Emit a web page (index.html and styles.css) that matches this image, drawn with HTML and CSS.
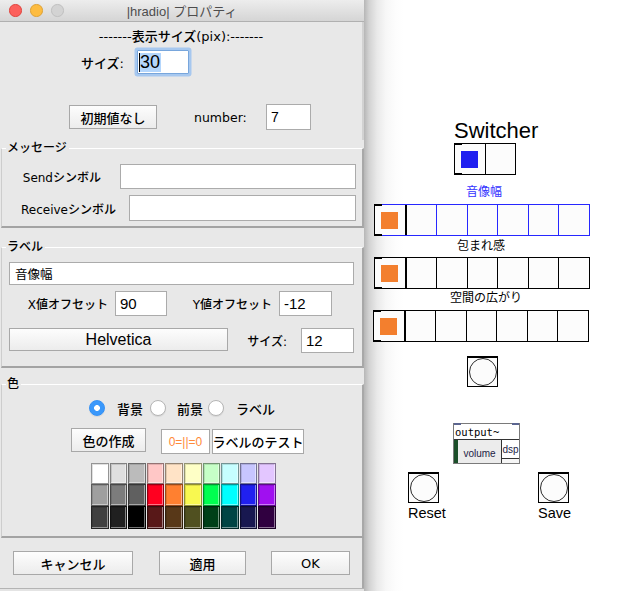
FILE: index.html
```html
<!DOCTYPE html>
<html lang="ja">
<head>
<meta charset="utf-8">
<title>|hradio| プロパティ</title>
<link rel="stylesheet" href="styles.css">
</head>
<body>
<div class="screen">
  <div class="dialog">
    <div class="titlebar">
      <div class="lights"><span class="light red"></span><span class="light yellow"></span><span class="light off"></span></div>
      <div class="title">|hradio| プロパティ</div>
      <div></div>
    </div>

    <section class="size-sec">
      <div class="heading">-------表示サイズ(pix):-------</div>
      <div class="size-row">
        <span class="lbl size-lbl">サイズ:</span>
        <span class="input focused"><span class="caret"></span><span class="sel">30</span></span>
      </div>
      <div class="num-row">
        <span class="btn init-btn">初期値なし</span>
        <span class="lbl num-lbl">number:</span>
        <span class="input num-in">7</span>
      </div>
    </section>

    <fieldset class="group msg">
      <legend>メッセージ</legend>
      <div class="mrow mrow1"><span class="lbl">Sendシンボル</span><span class="input send-in"></span></div>
      <div class="mrow mrow2"><span class="lbl">Receiveシンボル</span><span class="input recv-in"></span></div>
    </fieldset>

    <fieldset class="group label-grp">
      <legend>ラベル</legend>
      <div class="lrow1"><span class="input label-in">音像幅</span></div>
      <div class="lrow2">
        <span class="lbl xoff-lbl">X値オフセット</span><span class="input off-in big">90</span>
        <span class="lbl yoff-lbl">Y値オフセット</span><span class="input off-in2 big">-12</span>
      </div>
      <div class="lrow3">
        <span class="btn font-btn">Helvetica</span>
        <span class="lbl fsize-lbl">サイズ:</span>
        <span class="input fsize-in big">12</span>
      </div>
    </fieldset>

    <fieldset class="group color-grp">
      <legend>色</legend>
      <div class="radio-row">
        <span class="radio checked"></span><span class="rlbl r1">背景</span>
        <span class="radio r2"></span><span class="rlbl r2l">前景</span>
        <span class="radio r3"></span><span class="rlbl r3l">ラベル</span>
      </div>
      <div class="cbtn-row">
        <span class="btn make-btn">色の作成</span>
        <span class="testbox orange">0=||=0</span>
        <span class="testbox label-test">ラベルのテスト</span>
      </div>
      <div class="palette">
        <span class="sw" style="background:#ffffff"></span>
        <span class="sw" style="background:#dfdfdf"></span>
        <span class="sw" style="background:#bbbbbb"></span>
        <span class="sw" style="background:#ffc7c6"></span>
        <span class="sw" style="background:#ffe3c6"></span>
        <span class="sw" style="background:#feffc6"></span>
        <span class="sw" style="background:#c6ffc7"></span>
        <span class="sw" style="background:#c6feff"></span>
        <span class="sw" style="background:#c7c6ff"></span>
        <span class="sw" style="background:#e3c6ff"></span>
        <span class="sw" style="background:#9f9f9f"></span>
        <span class="sw" style="background:#7c7c7c"></span>
        <span class="sw" style="background:#606060"></span>
        <span class="sw" style="background:#ff0020"></span>
        <span class="sw" style="background:#ff8030"></span>
        <span class="sw" style="background:#f8f850"></span>
        <span class="sw" style="background:#00ff50"></span>
        <span class="sw" style="background:#00ffff"></span>
        <span class="sw" style="background:#2020f0"></span>
        <span class="sw" style="background:#a010f0"></span>
        <span class="sw" style="background:#404040"></span>
        <span class="sw" style="background:#202020"></span>
        <span class="sw" style="background:#000000"></span>
        <span class="sw" style="background:#581818"></span>
        <span class="sw" style="background:#583818"></span>
        <span class="sw" style="background:#505020"></span>
        <span class="sw" style="background:#004018"></span>
        <span class="sw" style="background:#004444"></span>
        <span class="sw" style="background:#181850"></span>
        <span class="sw" style="background:#300040"></span>
      </div>
    </fieldset>

    <div class="bottom">
      <span class="btn cancel-btn">キャンセル</span>
      <span class="btn apply-btn">適用</span>
      <span class="btn ok-btn">OK</span>
    </div>
  </div>

  <div class="canvas">
    <div class="c-title">Switcher</div>
    <div class="hr switcher"><span class="cell"><span class="dot blue-dot"></span></span><span class="cell"></span></div>

    <div class="clabel lab1">音像幅</div>
    <div class="hr row7 blue row-a"><span class="cell"><span class="dot"></span></span><span class="cell"></span><span class="cell"></span><span class="cell"></span><span class="cell"></span><span class="cell"></span><span class="cell"></span></div>

    <div class="clabel lab2">包まれ感</div>
    <div class="hr row7 row-b"><span class="cell"><span class="dot"></span></span><span class="cell"></span><span class="cell"></span><span class="cell"></span><span class="cell"></span><span class="cell"></span><span class="cell"></span></div>

    <div class="clabel lab3">空間の広がり</div>
    <div class="hr row7 row-c"><span class="cell"><span class="dot"></span></span><span class="cell"></span><span class="cell"></span><span class="cell"></span><span class="cell"></span><span class="cell"></span><span class="cell"></span></div>

    <div class="bang bang-mid"><span class="circle"></span></div>

    <div class="outobj">
      <div class="otext">output~</div>
      <div class="olower">
        <div class="vol">volume</div>
        <div class="dspcol"><div class="dsp">dsp</div></div>
      </div>
    </div>

    <div class="bang bang-reset"><span class="circle"></span></div>
    <div class="blabel reset-lbl">Reset</div>
    <div class="bang bang-save"><span class="circle"></span></div>
    <div class="blabel save-lbl">Save</div>
  </div>
</div>
</body>
</html>
```

FILE: styles.css
```css
* { box-sizing: border-box; }
html, body { margin: 0; padding: 0; }
body {
  width: 640px;
  height: 591px;
  overflow: hidden;
  font-family: "Liberation Sans", "Noto Sans CJK JP", sans-serif;
  font-size: 13px;
  color: #000;
  background: #e4e4e4;
}
.screen { display: flex; height: 591px; }

/* ---------- dialog ---------- */
.dialog {
  width: 364px;
  flex: none;
  height: 589px;
  background: #e8e8e8;
  border-bottom: 1px solid #b4b4b4;
  display: flex;
  flex-direction: column;
  font-family: "DejaVu Sans", "Noto Sans CJK JP", sans-serif;
  font-size: 12px;
  font-weight: 500;
}
.titlebar {
  height: 22px;
  flex: none;
  background: linear-gradient(#ededed, #d5d5d5);
  border-bottom: 1px solid #b0b0b0;
  display: grid;
  grid-template-columns: 1fr auto 1fr;
  align-items: center;
  font-family: "Liberation Sans", "Noto Sans CJK JP", sans-serif;
  font-weight: 400;
}
.lights { display: flex; gap: 8.5px; padding-left: 9px; }
.light { width: 12.5px; height: 12.5px; border-radius: 50%; }
.light.red { background: #fc605c; border: 1px solid #e0443e; }
.light.yellow { background: #fdbc40; border: 1px solid #dea236; }
.light.off { background: #d3d3d3; border: 1px solid #c0c0c0; }
.title { color: #4d4d4d; font-size: 13px; }

.lbl { white-space: nowrap; }
.input {
  background: #fff;
  border: 1px solid #ababab;
  display: flex;
  align-items: center;
  padding-left: 4px;
  white-space: nowrap;
  font-family: "Liberation Sans", "Noto Sans CJK JP", sans-serif;
  font-weight: 400;
}
.input.big { font-size: 15px; }
.btn {
  display: flex;
  align-items: center;
  justify-content: center;
  background: linear-gradient(#fdfdfd, #ececec);
  border: 1px solid #a8a8a8;
  white-space: nowrap;
}

.size-sec {
  height: 118px;
  flex: none;
  border-right: 2px solid #d2d2d2;
}
.heading {
  margin-top: 7px;
  line-height: 16px;
  font-size: 13px;
  text-align: center;
}
.size-row {
  display: flex;
  align-items: center;
  margin-top: 5px;
  height: 24px;
  padding-left: 70px;
}
.size-lbl { width: 54px; text-align: right; margin-right: 13px; font-size: 13px; }
.input.focused {
  width: 52px;
  height: 24px;
  border: 1px solid #78a6dc;
  border-radius: 1px;
  box-shadow: 0 0 0 2.5px #a7c8ef;
  padding-left: 1px;
  font-size: 18px;
}
.caret { width: 1px; height: 19px; background: #000; }
.sel { background: #b4d6fc; line-height: 19px; padding-right: 1px; }

.num-row {
  display: flex;
  align-items: center;
  margin-top: 30px;
  height: 26px;
  padding-left: 69px;
}
.init-btn { width: 88px; height: 24px; font-size: 13px; }
.num-lbl { margin-left: 37px; width: 72px; font-size: 12.5px; }
.num-in { width: 45px; height: 26px; font-size: 14px; }

/* ---------- titled groups ---------- */
.group {
  margin: 0 0 0 1px;
  padding: 0;
  min-width: 0;
  border: 0;
  border-top: 1px solid #ffffff;
  border-left: 1px solid #cdcdcd;
  border-right: 2px solid #a8a8a8;
  border-bottom: 2px solid #a3a3a3;
  flex: none;
}
.group legend {
  margin-left: 4px;
  padding: 0 2px 0 1px;
  line-height: 16px;
  font-size: 12px;
}

.msg { padding-bottom: 5px; }
.mrow { display: flex; align-items: center; justify-content: flex-end; padding-right: 6px; }
.mrow1 { margin-top: 8px; height: 25px; }
.mrow1 .lbl { margin-right: 19px; }
.send-in { width: 236px; height: 25px; }
.mrow2 { margin-top: 6px; height: 26px; }
.mrow2 .lbl { margin-right: 13px; }
.recv-in { width: 227px; height: 26px; }

.label-grp { margin-top: 11px; padding-bottom: 13px; }
.lrow1 { margin-top: 7px; height: 23px; padding-left: 7px; display: flex; }
.label-in { width: 345px; height: 23px; padding-left: 5px; font-size: 12.5px; }
.lrow2 { margin-top: 6px; height: 25px; display: flex; align-items: center; padding-left: 18px; }
.xoff-lbl { width: 88px; text-align: right; margin-right: 7px; }
.off-in { width: 52px; height: 25px; }
.yoff-lbl { width: 105px; text-align: right; margin-right: 7px; }
.off-in2 { width: 53px; height: 25px; }
.lrow3 { margin-top: 12px; height: 25px; display: flex; align-items: flex-start; padding-left: 7px; }
.font-btn { width: 219px; height: 23px; font-size: 16px; font-family: "Liberation Sans", sans-serif; font-weight: 400; }
.fsize-lbl { width: 59px; text-align: right; margin-right: 14px; align-self: center; }
.fsize-in { width: 53px; height: 25px; }

.color-grp { margin-top: 8px; padding-bottom: 7px; }
.radio-row { margin-top: 8px; height: 16px; display: flex; align-items: center; padding-left: 87px; }
.radio {
  width: 16px; height: 16px; border-radius: 50%;
  background: #fff;
  border: 1px solid #b5b5b5;
  box-shadow: 0 1px 1px rgba(0,0,0,0.08);
}
.radio.checked {
  background: radial-gradient(circle, #fff 0 2.6px, #3a98fb 3.2px);
  border: 1px solid #3490f5;
}
.rlbl { font-size: 13px; }
.r1 { margin-left: 12px; }
.r2 { margin-left: 7px; }
.r2l { margin-left: 11px; }
.r3 { margin-left: 5px; }
.r3l { margin-left: 12px; }

.cbtn-row { margin-top: 12px; height: 26px; display: flex; align-items: flex-start; padding-left: 69px; }
.make-btn { width: 75px; height: 24px; font-size: 13px; }
.testbox {
  height: 25px; margin-top: 1px;
  background: #fff; border: 1px solid #a8a8a8;
  display: flex; align-items: center; justify-content: center;
  white-space: nowrap;
}
.orange { width: 49px; margin-left: 15px; color: #ff8a3a; font-size: 12px; font-family: "Liberation Sans", sans-serif; }
.label-test { width: 92px; margin-left: 2px; font-size: 13px; }

.palette {
  margin-top: 9px;
  margin-left: 89px;
  width: 185px;
  display: grid;
  grid-template-columns: repeat(10, 1fr);
  grid-template-rows: 21px 22px 23px;
  column-gap: 1px;
}
.sw {
  border: 1px solid rgba(0,0,0,0.42);
  box-shadow: inset -1px -1px 0 rgba(255,255,255,0.45), inset 1px 1px 0 rgba(0,0,0,0.12);
}

.bottom {
  flex: 1;
  display: flex;
  align-items: flex-start;
  padding-top: 13px;
  border-right: 2px solid #a8a8a8;
}
.bottom .btn { height: 24px; font-size: 13px; }
.cancel-btn { width: 120px; margin-left: 13px; }
.apply-btn { width: 87px; margin-left: 26px; }
.ok-btn { width: 79px; margin-left: 25px; }

/* ---------- patch canvas ---------- */
.canvas {
  flex: 1;
  position: relative;
  height: 591px;
  background: linear-gradient(90deg, #b6b6b6 0, #d2d2d2 5px, #e9e9e9 13px, #f7f7f7 22px, #fdfdfd 32px, #ffffff 40px);
}
.c-title {
  position: absolute; left: 90px; top: 120px;
  font-size: 22px; line-height: 22px;
}
.hr {
  position: absolute;
  display: flex;
  height: 32px;
  border: 1px solid #000;
  background: #fcfcfc;
}
.hr::before, .hr::after {
  content: "";
  position: absolute;
  left: -1px;
  width: 8px;
  height: 2px;
  background: #000;
}
.hr::before { top: -1px; }
.hr::after { bottom: -1px; }
.hr .cell {
  flex: 1;
  border-left: 1px solid #000;
  display: flex;
  align-items: center;
  justify-content: center;
}
.hr .cell:first-child { border-left: 0; }
.row7 .cell:nth-child(2) { border-left: 2px solid #000; }
.hr.blue { border-color: #2727ff; border-left-color: #000; }
.hr.blue .cell { border-left-color: #2727ff; }
.hr.blue .cell:nth-child(2) { border-left-color: #000; }
.dot { width: 17px; height: 17px; background: #f37f2e; }
.blue-dot { background: #1f1ff0; }
.switcher { left: 90px; top: 143px; width: 62px; }
.row-a { left: 10px; top: 204px; width: 216px; }
.row-b { left: 10px; top: 257px; width: 216px; }
.row-c { left: 9px; top: 310px; width: 216px; }

.clabel {
  position: absolute;
  font-family: "Noto Sans CJK JP", sans-serif;
  font-size: 12px;
  line-height: 14px;
  white-space: nowrap;
}
.lab1 { left: 102px; top: 184px; color: #3535ff; }
.lab2 { left: 93px; top: 238px; }
.lab3 { left: 86px; top: 290px; }

.bang {
  position: absolute;
  width: 31px; height: 31px;
  border: 1px solid #000;
  border-top-width: 2px;
  background: #fcfcfc;
  display: flex; align-items: center; justify-content: center;
}
.circle { width: 28px; height: 28px; border: 1px solid #2a2a2a; border-radius: 50%; }
.bang-mid { left: 103px; top: 356px; }
.bang-reset { left: 44px; top: 472px; }
.bang-save { left: 174px; top: 472px; }
.blabel { position: absolute; font-size: 14.5px; line-height: 16px; }
.reset-lbl { left: 44px; top: 505px; }
.save-lbl { left: 174px; top: 505px; }

.outobj {
  position: absolute;
  left: 89px; top: 423px;
  width: 67px; height: 41px;
  border: 1px solid #7a7a7a;
  background: #fff;
  display: flex;
  flex-direction: column;
}
.outobj::before, .outobj::after {
  content: "";
  position: absolute;
  top: -1px;
  width: 7px; height: 2px;
  background: #5b6590;
}
.outobj::before { left: 0; }
.outobj::after { right: 0; }
.otext {
  height: 15px;
  font-family: "DejaVu Sans Mono", monospace;
  font-size: 10.5px;
  line-height: 16px;
  padding-left: 1px;
}
.olower { flex: 1; display: flex; border-top: 1px solid #333; }
.vol {
  width: 48px;
  background: #ececec;
  border-left: 4px solid #1b4e29;
  border-right: 1px solid #333;
  display: flex; align-items: center; justify-content: center;
  font-size: 10px;
  color: #1d1d45;
  padding-top: 3px;
}
.dspcol { flex: 1; display: flex; flex-direction: column; background: #f6f6f6; }
.dsp {
  height: 19px;
  background: #fff;
  border-bottom: 1px solid #333;
  display: flex; align-items: center; justify-content: center;
  font-size: 10px;
  color: #1d1d45;
}
```
